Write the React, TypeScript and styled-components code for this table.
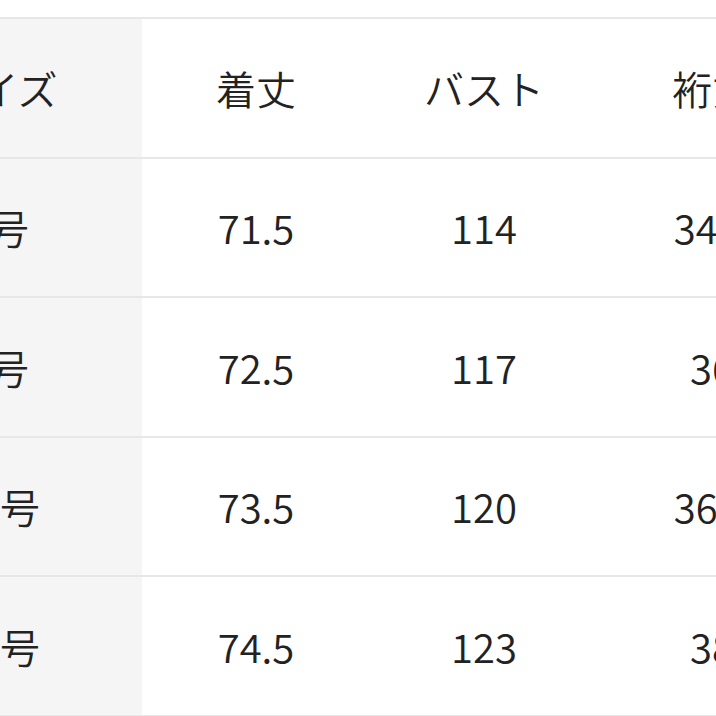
import styled, { createGlobalStyle } from 'styled-components';

const GlobalStyle = createGlobalStyle`
  html, body {
    margin: 0;
    padding: 0;
    background: #ffffff;
    overflow: hidden;
  }
`;

const Page = styled.div`
  width: 716px;
  height: 716px;
  overflow: hidden;
  padding-top: 17px;
  box-sizing: border-box;
`;

const Table = styled.table`
  width: 972px;
  margin-left: -146px;
  border-collapse: collapse;
  table-layout: fixed;
  font-family: "Noto Sans CJK JP", "Noto Sans", sans-serif;
  font-size: 40px;
  font-weight: 350;
  color: #222222;
`;

const Row = styled.tr`
  height: 139.5px;
  border-top: 2px solid #e7e7e7;
  border-bottom: 2px solid #e7e7e7;
`;

const HeadCell = styled.th`
  padding: 0;
  font-weight: 350;
  text-align: center;
  vertical-align: middle;
  white-space: nowrap;
  background: #f5f5f5;
`;

const Cell = styled.td`
  padding: 0;
  text-align: center;
  vertical-align: middle;
  white-space: nowrap;
  background: #ffffff;
`;

const columns = ['着丈', 'バスト', '裄丈'];

const rows = [
  { size: '7号', values: ['71.5', '114', '34.5'] },
  { size: '9号', values: ['72.5', '117', '36'] },
  { size: '11号', values: ['73.5', '120', '36.5'] },
  { size: '13号', values: ['74.5', '123', '38'] },
];

const App = () => {
  return (
    <Page>
      <GlobalStyle />
      <Table>
        <colgroup>
          <col style={{ width: 288 }} />
          {columns.map((c) => (
            <col key={c} style={{ width: 228 }} />
          ))}
        </colgroup>
        <tbody>
          <Row>
            <HeadCell>サイズ</HeadCell>
            {columns.map((c) => (
              <Cell key={c}>{c}</Cell>
            ))}
          </Row>
          {rows.map((r) => (
            <Row key={r.size}>
              <HeadCell>{r.size}</HeadCell>
              {r.values.map((v, i) => (
                <Cell key={i}>{v}</Cell>
              ))}
            </Row>
          ))}
        </tbody>
      </Table>
    </Page>
  );
};

export default App;
